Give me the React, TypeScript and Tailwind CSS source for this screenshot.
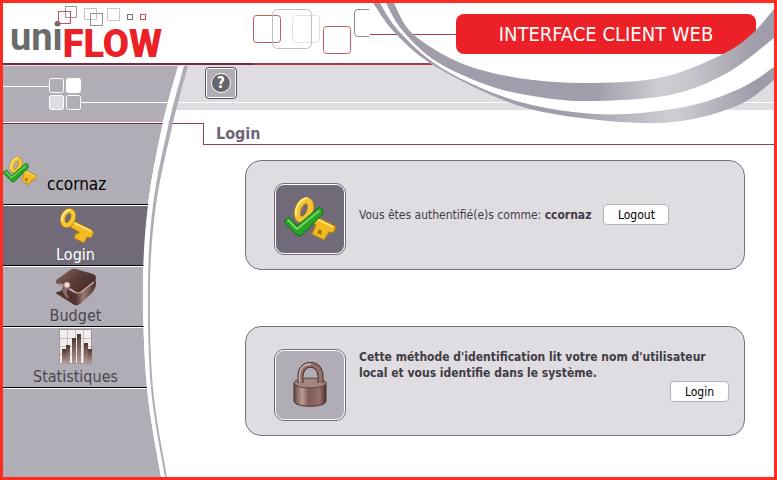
import type { ReactNode } from "react";

type Point = [number, number];

/** Smooth curve commands through a list of points (Catmull-Rom as cubics). */
function curve(points: Point[]): string {
  let d = "";
  for (let i = 0; i < points.length - 1; i++) {
    const a = points[Math.max(i - 1, 0)];
    const b = points[i];
    const c = points[i + 1];
    const e = points[Math.min(i + 2, points.length - 1)];
    d += `C${b[0] + (c[0] - a[0]) / 6} ${b[1] + (c[1] - a[1]) / 6} ${c[0] - (e[0] - b[0]) / 6} ${c[1] - (e[1] - b[1]) / 6} ${c[0]} ${c[1]}`;
  }
  return d;
}

function ribbon(top: Point[], bottom: Point[]): string {
  const back = [...bottom].reverse();
  return `M${top[0]}${curve(top)}L${back[0]}${curve(back)}Z`;
}

const upperTop: Point[] = [[394, 3], [413, 34], [463, 64], [525, 79], [593, 83], [663, 77], [723, 54], [753, 33], [774, 9]];
const upperBottom: Point[] = [[386, 3], [402, 30], [437, 62], [493, 87], [545, 98], [595, 101], [670, 95], [727, 73], [774, 38]];
const lowerTop: Point[] = [[380, 3], [397, 29], [430, 60], [470, 83], [520, 102], [573, 112], [627, 114], [693, 105], [743, 87], [774, 67]];
const lowerBottom: Point[] = [[373, 3], [395, 33], [433, 65], [503, 100], [560, 115], [640, 123], [693, 119], [743, 103], [774, 80]];

function SwooshBackdrop() {
  return (
    <svg className="pointer-events-none absolute top-0 right-0" width="404" height="124" viewBox="370 3 404 124" aria-hidden="true">
      <path d={`M373 3${curve(lowerBottom)}L774 3Z`} fill="#fff" />
      <path d="M370 34.5H456" stroke="#a8404a" />
    </svg>
  );
}

function Swoosh() {
  return (
    <svg className="pointer-events-none absolute top-0 right-0 z-20" width="404" height="124" viewBox="370 3 404 124" aria-hidden="true">
      <defs>
        <linearGradient id="upper" gradientUnits="userSpaceOnUse" x1="370" x2="774" y1="0" y2="0">
          <stop offset="0.56" stopColor="#a29dab" />
          <stop offset="0.72" stopColor="#cfcdd4" />
          <stop offset="0.79" stopColor="#c8c6cd" />
          <stop offset="0.95" stopColor="#a19ca9" />
        </linearGradient>
        <linearGradient id="lower" gradientUnits="userSpaceOnUse" x1="370" x2="774" y1="0" y2="0">
          <stop offset="0.5" stopColor="#a29dab" />
          <stop offset="0.75" stopColor="#cfcdd4" />
          <stop offset="0.95" stopColor="#a19ca9" />
        </linearGradient>
      </defs>
      <path d={ribbon(upperBottom, lowerTop)} fill="#fff" />
      <path d={ribbon(upperTop, upperBottom)} fill="url(#upper)" />
      <path d={ribbon(lowerTop, lowerBottom)} fill="url(#lower)" />
    </svg>
  );
}

function HeaderSquares() {
  return (
    <svg className="ml-auto h-[60px] w-[206px] shrink-0" viewBox="250 3 206 60" fill="none" aria-hidden="true">
      <rect x="253.5" y="15.5" width="27" height="27" rx="3" stroke="#c45a60" />
      <rect x="292.5" y="15.5" width="27" height="27" rx="3" stroke="#e2e1e4" />
      <rect x="272.5" y="9.5" width="39" height="39" rx="5" stroke="#bdbbc4" />
      <rect x="323.5" y="26.5" width="27" height="27" rx="3" stroke="#c45a60" />
      <path d="M369 9.500H358a3.500 3.500 0 0 0-3.500 3.500v20a3.500 3.500 0 0 0 3.500 3.500h11" stroke="#8d8b95" />
    </svg>
  );
}

function Logo() {
  return (
    <h1 className="relative flex h-[60px] w-[165px] shrink-0 items-start pl-[7px] font-['Roboto',sans-serif] leading-[42px]">
      <svg className="absolute top-0 left-0" width="165" height="30" viewBox="3 3 165 30" fill="none" aria-hidden="true">
        <rect x="65.500" y="6.500" width="11" height="11" stroke="#999" />
        <rect x="58.500" y="11.500" width="12" height="12" stroke="#c8505a" />
        <rect x="84.500" y="8.500" width="12" height="11" stroke="#c4c8c8" />
        <rect x="90.500" y="13.500" width="12" height="12" stroke="#8f9696" />
        <rect x="107.500" y="8.500" width="12" height="12" stroke="#c9c9c9" />
        <rect x="127.500" y="14.500" width="5" height="5" stroke="#777" />
        <rect x="140.500" y="14.500" width="5" height="5" stroke="#d8454c" />
      </svg>
      <span className="pt-[13px] text-[38px] font-bold text-[#6b6b6b]">uni</span>
      <span className="pt-5 text-[38px] font-black text-[#ec2027]">FLOW</span>
    </h1>
  );
}

const sidebarEdge: Point[] = [[178, 66], [162, 127], [148, 205], [143, 285], [147, 388], [161, 477]];

function SidebarShape() {
  return (
    <svg className="pointer-events-none absolute top-0 left-0 h-full w-[190px]" viewBox="3 66 190 411" preserveAspectRatio="none" aria-hidden="true">
      <path d={`M3 66L178 66${curve(sidebarEdge)}L3 477Z`} fill="#b0adb6" />
      <path d="M3 86.500H50M81 102.500H172M3 122.500H164" stroke="#fff" />
      <path d="M3 123.500H164" stroke="#7b2c48" />
      <g stroke="#fff">
        <rect x="49.500" y="78.500" width="14" height="14" rx="2" fill="#b0adb6" />
        <rect x="66.500" y="78.500" width="14" height="14" rx="2" fill="#fff" />
        <rect x="49.500" y="95.500" width="14" height="14" rx="2" fill="#dfdde2" />
        <rect x="66.500" y="95.500" width="14" height="14" rx="2" fill="#b0adb6" />
      </g>
    </svg>
  );
}

function SidebarEdge() {
  const inner: Point[] = [[184, 66], [168, 127], [153, 205], [148, 285], [151, 388], [165, 477]];
  const outer: Point[] = [[188, 66], [172, 127], [156, 205], [150, 285], [153, 388], [167, 477]];
  return (
    <svg className="pointer-events-none absolute top-0 left-0 z-10 h-full w-[190px]" viewBox="3 66 190 411" preserveAspectRatio="none" aria-hidden="true">
      <path d={ribbon(sidebarEdge, inner)} fill="#fff" />
      <path d={ribbon(inner, outer)} fill="#b0adb6" />
    </svg>
  );
}

function KeyIcon() {
  return (
    <svg width="38" height="38" viewBox="0 0 38 38" aria-hidden="true">
      <path d="m15 13 20 10q2 2 1 4l-2 4-4-1-3 6-10-5 2-5 2 1 1-2-9-5Z" fill="#f3bd22" stroke="#b07d17" strokeLinejoin="round" />
      <path d="m15 15 19 9" stroke="#ffe680" strokeWidth="1.500" />
      <ellipse cx="11" cy="11" rx="5" ry="7.500" transform="rotate(22 11 11)" fill="none" stroke="#b07d17" strokeWidth="5.500" />
      <ellipse cx="11" cy="11" rx="5" ry="7.500" transform="rotate(22 11 11)" fill="none" stroke="#f5c832" strokeWidth="4" />
      <path d="M5 14C4 8 9 3 13 3" fill="none" stroke="#fff0a0" strokeWidth="1.300" strokeLinecap="round" />
    </svg>
  );
}

function KeyCheckIcon({ className }: { className: string }) {
  return (
    <svg className={className} viewBox="0 0 52 46" aria-hidden="true">
      <ellipse cx="20" cy="14" rx="6" ry="10" transform="rotate(22 20 14)" fill="none" stroke="#b5801a" strokeWidth="7" />
      <ellipse cx="20" cy="14" rx="6" ry="10" transform="rotate(22 20 14)" fill="none" stroke="#f3c532" strokeWidth="5.500" />
      <path d="M12 19C11 10 17 3 23 2" fill="none" stroke="#ffec92" strokeWidth="1.800" strokeLinecap="round" />
      <path d="m33 21 18 9q1 1 0 3l-2 4-4-1-5 8-12-6 4-9-3-2Z" fill="#f3bd22" stroke="#b5801a" strokeWidth="1.200" strokeLinejoin="round" />
      <path d="m33 37 2-4 3 2-1 4Z" fill="#a87316" />
      <path d="m33 23 16 8" stroke="#ffe57a" strokeWidth="1.500" />
      <path d="m1 24 3-2q2-1 3 1l6 7 21-18q2-2 4 1l1 3q0 2-1 3L18 39q-3 2-5 0L1 27q-1-2 0-3Z" fill="#2aa128" stroke="#166a1b" />
      <path d="m4 24 9 9 22-18" fill="none" stroke="#72d95a" strokeWidth="1.800" strokeLinecap="round" />
    </svg>
  );
}

function WalletIcon() {
  return (
    <svg width="42" height="38" viewBox="0 0 42 38" aria-hidden="true">
      <defs>
        <linearGradient id="leather" x1="0" y1="0" x2="1" y2="0.6">
          <stop offset="0" stopColor="#8b6963" />
          <stop offset="0.5" stopColor="#5d403c" />
          <stop offset="1" stopColor="#452b29" />
        </linearGradient>
        <linearGradient id="leatherSide" x1="0" y1="0" x2="1" y2="0">
          <stop offset="0" stopColor="#4a2f2d" />
          <stop offset="0.4" stopColor="#9a7872" />
          <stop offset="1" stopColor="#4a2f2d" />
        </linearGradient>
      </defs>
      <path d="M2 24 12 21l12 6-1 10q-3 1-5-1L2 26q-2-1 0-2Z" fill="#54332f" />
      <path d="M21 24 40 11q2 4 0 9-2 4-4 6L25 36q-3 2-5 0Z" fill="url(#leatherSide)" />
      <path d="M1 14q0-3 3-4L15 2q3-2 6-1l17 5q3 1 3 4 0 2-3 4L26 24q-3 2-6 0l-9-6-8-1q-2-1-2-3Z" fill="url(#leather)" />
      <path d="M2 16q8 0 12 4l6 4q3 2 6 0l13-10" fill="none" stroke="#d3b1aa" strokeWidth="1.200" />
      <path d="m9 18 6 1-3 5 3 8-5-3-3-6Z" fill="#8f6b65" stroke="#4a2b28" strokeWidth="0.800" />
      <circle cx="12" cy="17" r="3" fill="#f4dcd5" stroke="#a5837c" />
    </svg>
  );
}

function ChartIcon() {
  const bars: Point[] = [[4, 20], [8, 16], [14, 9], [19, 5], [26, 14], [30, 20]];
  return (
    <svg width="34" height="35" viewBox="0 0 34 35" aria-hidden="true">
      <defs>
        <linearGradient id="bar" x1="0" y1="0" x2="0" y2="1">
          <stop offset="0" stopColor="#4e3330" />
          <stop offset="1" stopColor="#b49a95" />
        </linearGradient>
      </defs>
      <rect x="0.500" y="0.500" width="32" height="34" fill="#f1eeef" stroke="#a79496" />
      <path d="M8.500 1v33M16.500 1v33M24.500 1v33M1 9.500h31M1 17.500h31M1 25.500h31" stroke="#c9bcbe" />
      {bars.map(([x, y]) => (
        <rect key={x} x={x - 1} y={y} width="4" height={34 - y} fill="url(#bar)" />
      ))}
    </svg>
  );
}

function PadlockIcon() {
  return (
    <svg width="34" height="46" viewBox="0 0 34 46" aria-hidden="true">
      <defs>
        <linearGradient id="lock" x1="0" y1="0" x2="1" y2="0">
          <stop offset="0" stopColor="#65453f" />
          <stop offset="0.25" stopColor="#bd9e97" />
          <stop offset="0.45" stopColor="#805a55" />
          <stop offset="0.8" stopColor="#94736d" />
          <stop offset="1" stopColor="#4c302d" />
        </linearGradient>
      </defs>
      <path d="M1 21v18c0 7 32 7 32 0V21Z" fill="url(#lock)" stroke="#49302e" />
      <ellipse cx="17" cy="21" rx="16" ry="5" fill="#a38680" stroke="#5d403c" />
      <path d="M7.500 21V14C7.500-1 27.500-1 27.500 14v7" fill="none" stroke="#4d312e" strokeWidth="6" />
      <path d="M7.500 21V14C7.500-1 27.500-1 27.500 14v7" fill="none" stroke="#92706a" strokeWidth="4" />
      <path d="M6.500 20V13C7 4 13 2 18 2" fill="none" stroke="#d3b9b3" strokeWidth="1.300" />
    </svg>
  );
}

function NavItem({ label, icon, active = false }: { label: string; icon: ReactNode; active?: boolean }) {
  return (
    <li>
      <a
        href="#"
        className={`flex h-[61px] flex-col items-center justify-between border-t border-b border-t-white border-b-black text-base leading-5 ${active ? "bg-[#716a79] text-white" : "text-[#49454f]"}`}
      >
        <span className="flex h-[38px] items-start justify-center pt-px">{icon}</span>
        {label}
      </a>
    </li>
  );
}

function Tile({ dark = false, children }: { dark?: boolean; children: ReactNode }) {
  return (
    <div className="size-[72px] shrink-0 rounded-[10px] border border-[#716a79] bg-white p-px">
      <div className={`flex size-full items-center justify-center rounded-lg ${dark ? "bg-[#716a79]" : "bg-[#b0adb6]"}`}>{children}</div>
    </div>
  );
}

const card = "flex h-[110px] rounded-2xl border border-[#77747e] bg-[#dfdde2] pt-[22px] pr-[15px] pl-7 text-xs text-[#3f3c45]";
const cardButton = "h-[21px] shrink-0 rounded border border-[#b5b3b8] bg-white text-xs leading-none text-black";

export default function App() {
  return (
    <div className="relative flex min-h-screen flex-col overflow-hidden border-3 border-[#ff2d20] bg-white font-['DejaVu_Sans_Condensed','DejaVu_Sans',sans-serif]">
      <header className="flex h-[63px] shrink-0 items-start border-b border-[#f3d3dc]">
        <Logo />
        <HeaderSquares />
        <div className="relative z-10 mt-[11px] mr-[18px] flex h-10 w-[300px] shrink-0 items-center justify-center rounded-lg bg-[#ec2027] text-xl text-white">
          INTERFACE CLIENT WEB
        </div>
      </header>
      <div className="-mt-[3px] mb-px flex h-[2px] shrink-0">
        <div className="w-[250px] bg-[#6f2c4a]" />
        <div className="grow bg-[#94404f]" />
      </div>

      <div className="relative flex grow">
        <SidebarShape />
        <aside className="relative w-[145px] shrink-0 pt-[58px]">
          <div className="flex h-[81px] items-end border-b border-black">
            <KeyCheckIcon className="mb-[17px] h-[32px] w-[34px]" />
            <span className="pb-2 pl-[10px] text-[17px] leading-6 text-black">ccornaz</span>
          </div>
          <nav aria-label="Menu">
            <ul className="border-b border-white">
              <NavItem label="Login" icon={<KeyIcon />} active />
              <NavItem label="Budget" icon={<WalletIcon />} />
              <NavItem label="Statistiques" icon={<ChartIcon />} />
            </ul>
          </nav>
        </aside>
        <SidebarEdge />

        <main className="min-w-0 grow">
          <div className="ml-7 h-9 bg-[#dfdde2] pt-px pl-[29px]">
            <button type="button" aria-label="Aide" className="flex size-8 items-center justify-center rounded border border-[#55525b] bg-[#b0adb6] ring-1 ring-white ring-inset">
              <span className="flex size-5 items-center justify-center rounded-full border border-white bg-[#66666a] text-[15px] leading-none font-bold text-white">?</span>
            </button>
          </div>
          <div className="ml-6 h-2 border-t border-white bg-[#dfdde2]" />
          <div className="mt-[13px] ml-[20px] flex h-[22px]">
            <div className="w-9 shrink-0 border-t border-r border-[#963c50]" />
            <h2 className="grow border-b border-[#963c50] pt-px pl-3 text-base leading-5 font-bold text-[#6d6678]">Login</h2>
          </div>

          <div className="mr-[29px] ml-[97px] flex flex-col gap-14 pt-[15px] pb-10">
            <section className={card}>
              <Tile dark>
                <KeyCheckIcon className="h-[46px] w-[52px]" />
              </Tile>
              <p className="pt-6 pl-[13px] leading-4">
                Vous êtes authentifié(e)s comme: <strong>ccornaz</strong>
              </p>
              <button type="button" className={`${cardButton} mt-[21px] ml-3 w-[66px]`}>Logout</button>
            </section>
            <section className={card}>
              <Tile>
                <PadlockIcon />
              </Tile>
              <div className="flex grow flex-col pl-[13px]">
                <p className="max-w-[360px] leading-4 font-bold">
                  Cette méthode d'identification lit votre nom d'utilisateur local et vous identifie dans le système.
                </p>
                <button type="button" className={`${cardButton} w-[59px] self-end`}>Login</button>
              </div>
            </section>
          </div>
        </main>
      </div>
      <SwooshBackdrop />
      <Swoosh />
    </div>
  );
}
